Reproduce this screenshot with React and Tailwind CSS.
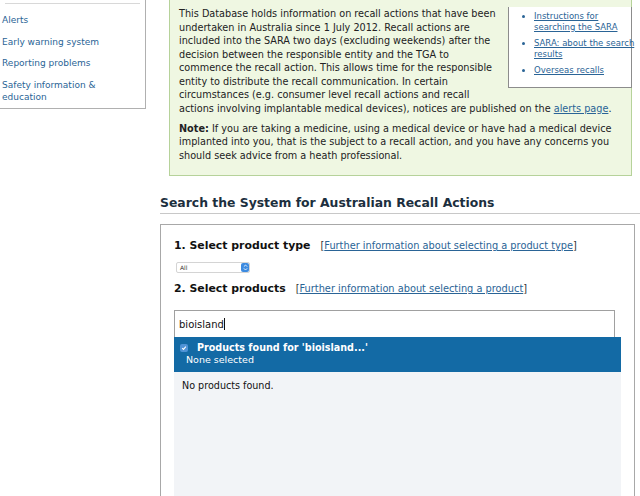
import React from "react";

const font = { fontFamily: '"DejaVu Sans", Verdana, sans-serif' };

const Sidebar = () => {
  return (
    <div className="w-[146px] shrink-0 h-[109px] border-r border-b border-[#b0b0b0]">
      <div className="mx-[5px] h-[4px] border-b border-[#d8d8d8]" />
      <ul className="pl-[2px] pt-[10px] text-[9px] leading-[12px] text-[#2a6496]">
        <li className="mb-[10px]">Alerts</li>
        <li className="mb-[9px]">Early warning system</li>
        <li className="mb-[10px]">Reporting problems</li>
        <li>
          Safety information &amp;
          <br />
          education
        </li>
      </ul>
    </div>
  );
};

const SideLinks = () => {
  return (
    <div className="float-right w-[124px] -mr-[9px] ml-[12px] mb-[6px] bg-white border border-t-0 border-[#8c8c8c] pt-[3.5px] pb-[11px] pl-[12px]">
      <ul className="list-disc pl-[13px] text-[8.5px] leading-[11px] text-[#2a6496] whitespace-nowrap">
        <li className="mb-[5px] underline">
          Instructions for
          <br />
          searching the SARA
        </li>
        <li className="mb-[5px] underline">
          SARA: about the search
          <br />
          results
        </li>
        <li className="underline">Overseas recalls</li>
      </ul>
    </div>
  );
};

const InfoBox = () => {
  return (
    <div className="ml-[9px] w-[463px] bg-[#eff7e2] border border-t-0 border-[#b6d29a] pl-[9px] pr-[8px] pt-[7.25px] pb-[13px] text-[9.7px] leading-[13.5px] text-[#222]">
      <SideLinks />
      <p className="mb-[6.5px] whitespace-nowrap">
        This Database holds information on recall actions that have been
        <br />
        undertaken in Australia since 1 July 2012. Recall actions are
        <br />
        included into the SARA two days (excluding weekends) after the
        <br />
        decision between the responsible entity and the TGA to
        <br />
        commence the recall action. This allows time for the responsible
        <br />
        entity to distribute the recall communication. In certain
        <br />
        circumstances (e.g. consumer level recall actions and recall
        <br />
        actions involving implantable medical devices), notices are published on the{" "}
        <span className="text-[#2a6496] underline">alerts page</span>.
      </p>
      <p className="whitespace-nowrap">
        <b>Note:</b> If you are taking a medicine, using a medical device or have had a medical device
        <br />
        implanted into you, that is the subject to a recall action, and you have any concerns you
        <br />
        should seek advice from a heath professional.
      </p>
    </div>
  );
};

const Check = () => (
  <span className="w-[8px] h-[8px] rounded-[2px] bg-[#4f93d6] flex items-center justify-center">
    <svg width="6" height="6" viewBox="0 0 10 10">
      <path d="M2 5.2 L4.2 7.4 L8 2.8" fill="none" stroke="white" strokeWidth="1.8" />
    </svg>
  </span>
);

const SearchPanel = () => {
  return (
    <div className="w-[475px] border border-b-0 border-[#a8a8a8] pl-[13px] pr-[13px] pt-[13px] h-[280px]">
      <div className="flex items-baseline h-[16px] leading-[16px] text-[#111]">
        <span className="font-bold text-[10.9px]">1. Select product type</span>
        <span className="ml-[10px] text-[9.8px] text-[#333]">
          [<span className="text-[#2a6496] underline">Further information about selecting a product type</span>]
        </span>
      </div>
      <div className="mt-[8px] ml-[2px] w-[74px] h-[11px] bg-white border border-[#d4d4d4] rounded-[2px] flex items-center justify-between">
        <span className="pl-[3px] text-[6px] leading-[8px] text-[#333]">All</span>
        <span className="w-[8px] h-[9px] rounded-[2px] bg-[#3d8be0] flex items-center justify-center">
          <svg width="5" height="7" viewBox="0 0 6 8">
            <path d="M1 3 L3 1 L5 3 M1 5 L3 7 L5 5" fill="none" stroke="white" strokeWidth="1" />
          </svg>
        </span>
      </div>
      <div className="mt-[8px] flex items-baseline h-[16px] leading-[16px] text-[#111]">
        <span className="font-bold text-[10.9px]">2. Select products</span>
        <span className="ml-[10px] text-[9.8px] text-[#333]">
          [<span className="text-[#2a6496] underline">Further information about selecting a product</span>]
        </span>
      </div>
      <div className="mt-[13px] w-[441px] h-[27px] border border-b-0 border-[#a0a0a0] bg-white flex items-center pl-[4px] text-[10px] text-[#111]">
        bioisland<span className="w-px h-[12px] bg-[#111]" />
      </div>
      <div className="w-[447px] h-[35px] bg-[#136aa5] text-white pl-[6px] pt-[5px]">
        <div className="flex items-center gap-[9px]">
          <Check />
          <span className="font-bold text-[9.6px] leading-[12px]">Products found for 'bioisland...'</span>
        </div>
        <div className="pl-[6px] text-[9.5px] leading-[12px]">None selected</div>
      </div>
      <div className="w-[447px] h-[130px] bg-[#f2f4f7] pl-[8px] pt-[8px] text-[9.6px] leading-[12px] text-[#111]">
        No products found.
      </div>
    </div>
  );
};

export default function App() {
  return (
    <div className="w-[640px] h-[496px] overflow-hidden bg-white flex" style={font}>
      <Sidebar />
      <div className="flex-1 pl-[14px]">
        <InfoBox />
        <div className="mt-[20px] w-[480px] border-b border-[#c8c8c8] pb-[3px] font-bold text-[12.4px] leading-[14px] text-[#1c2f3e] whitespace-nowrap">
          Search the System for Australian Recall Actions
        </div>
        <div className="mt-[10px]">
          <SearchPanel />
        </div>
      </div>
    </div>
  );
}
